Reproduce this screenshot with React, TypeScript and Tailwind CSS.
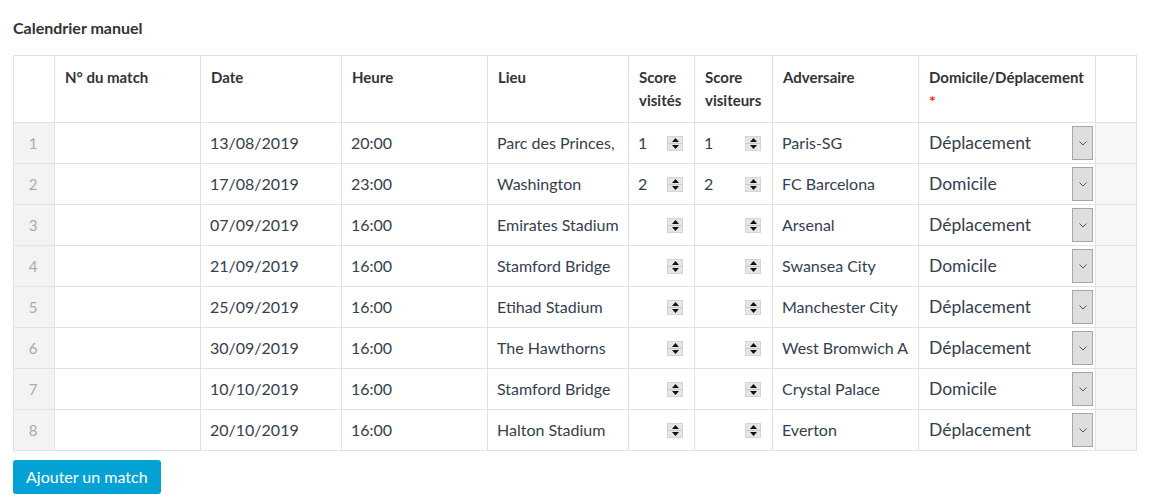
import React from "react"

interface IMatch {
  date: string
  heure: string
  lieu: string
  scoreA: string
  scoreB: string
  adversaire: string
  lieuType: string
}

const matches: IMatch[] = [
  { date: "13/08/2019", heure: "20:00", lieu: "Parc des Princes,", scoreA: "1", scoreB: "1", adversaire: "Paris-SG", lieuType: "Déplacement" },
  { date: "17/08/2019", heure: "23:00", lieu: "Washington", scoreA: "2", scoreB: "2", adversaire: "FC Barcelona", lieuType: "Domicile" },
  { date: "07/09/2019", heure: "16:00", lieu: "Emirates Stadium", scoreA: "", scoreB: "", adversaire: "Arsenal", lieuType: "Déplacement" },
  { date: "21/09/2019", heure: "16:00", lieu: "Stamford Bridge", scoreA: "", scoreB: "", adversaire: "Swansea City", lieuType: "Domicile" },
  { date: "25/09/2019", heure: "16:00", lieu: "Etihad Stadium", scoreA: "", scoreB: "", adversaire: "Manchester City", lieuType: "Déplacement" },
  { date: "30/09/2019", heure: "16:00", lieu: "The Hawthorns", scoreA: "", scoreB: "", adversaire: "West Bromwich A", lieuType: "Déplacement" },
  { date: "10/10/2019", heure: "16:00", lieu: "Stamford Bridge", scoreA: "", scoreB: "", adversaire: "Crystal Palace", lieuType: "Domicile" },
  { date: "20/10/2019", heure: "16:00", lieu: "Halton Stadium", scoreA: "", scoreB: "", adversaire: "Everton", lieuType: "Déplacement" },
]

function Spinner() {
  return (
    <span className="flex h-[15px] w-[16px] flex-col border border-[#d4d4d4] bg-[#e6e6e6]">
      <span className="flex flex-1 items-center justify-center border-b border-[#c8c8c8]">
        <svg width="7" height="4" viewBox="0 0 7 4"><path d="M3.5 0L7 4H0z" fill="#111" /></svg>
      </span>
      <span className="flex flex-1 items-center justify-center">
        <svg width="7" height="4" viewBox="0 0 7 4"><path d="M0 0h7L3.5 4z" fill="#111" /></svg>
      </span>
    </span>
  )
}

function ScoreCell({ value }: { value: string }) {
  return (
    <td className="border border-[#e2e2e2] pl-[9px] pr-[10px]">
      <div className="flex items-center justify-between">
        <span>{value}</span>
        <span className="mr-[1px]"><Spinner /></span>
      </div>
    </td>
  )
}

export default function App() {
  const th = "border border-[#e2e2e2] px-[10px] pt-[10px] align-top text-left text-[15px] font-bold leading-[23px] text-[#333]"
  const td = "border border-[#e2e2e2] px-[9px] whitespace-nowrap overflow-hidden"

  return (
    <div className="bg-white px-[13px] pt-[18px] text-[#34404f]" style={{ fontFamily: "Lato, 'Noto Sans', sans-serif" }}>
      <h2 className="text-[16px] font-bold leading-[20px] text-[#333]">Calendrier manuel</h2>

      <table className="mt-[17px] w-[1123px] table-fixed border-collapse border border-[#e2e2e2] text-[16px]">
        <colgroup>
          <col className="w-[41px]" />
          <col className="w-[146px]" />
          <col className="w-[141px]" />
          <col className="w-[146px]" />
          <col className="w-[141px]" />
          <col className="w-[66px]" />
          <col className="w-[78px]" />
          <col className="w-[146px]" />
          <col className="w-[177px]" />
          <col className="w-[41px]" />
        </colgroup>
        <thead>
          <tr className="h-[67px]">
            <th className={th}></th>
            <th className={th}>N° du match</th>
            <th className={th}>Date</th>
            <th className={th}>Heure</th>
            <th className={th}>Lieu</th>
            <th className={th}>Score visités</th>
            <th className={th}>Score visiteurs</th>
            <th className={th}>Adversaire</th>
            <th className={th}>
              Domicile/Déplacement
              <div className="mt-[3px] text-[16px] leading-[18px] text-[#ff1a1a]">*</div>
            </th>
            <th className={th}></th>
          </tr>
        </thead>
        <tbody>
          {matches.map((m, i) => (
            <tr key={i} className="h-[41px]">
              <td className="border border-[#e2e2e2] bg-[#f3f3f3] pr-[2px] text-center text-[15px] text-[#aaa]">{i + 1}</td>
              <td className={td}></td>
              <td className={td}>{m.date}</td>
              <td className={td}>{m.heure}</td>
              <td className={td}>{m.lieu}</td>
              <ScoreCell value={m.scoreA} />
              <ScoreCell value={m.scoreB} />
              <td className={td}>{m.adversaire}</td>
              <td className="border border-[#e2e2e2] pl-[10px] pr-[2px]">
                <div className="flex items-center justify-between">
                  <span className="text-[17.5px]">{m.lieuType}</span>
                  <span className="flex h-[34px] w-[21px] items-center justify-center border border-[#a6a6a6] bg-[#dedede]">
                    <svg width="8" height="5" viewBox="0 0 8 5"><path d="M0.5 0.5L4 4L7.5 0.5" fill="none" stroke="#555" strokeWidth="1" /></svg>
                  </span>
                </div>
              </td>
              <td className="border border-[#e2e2e2] bg-[#f7f7f7]"></td>
            </tr>
          ))}
        </tbody>
      </table>

      <button className="mt-[9px] h-[34px] rounded-[3px] bg-[#04a2d4] px-[13px] text-[16px] text-white">
        Ajouter un match
      </button>
    </div>
  )
}
